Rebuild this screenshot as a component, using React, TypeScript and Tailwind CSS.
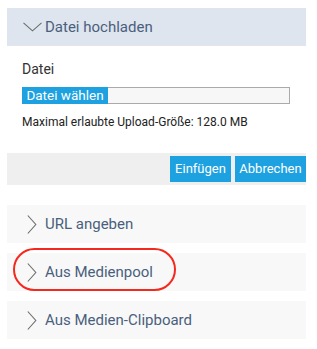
import React from 'react';

const ChevronDown = () => (
  <svg width="19" height="10" viewBox="0 0 19 10" fill="none" className="shrink-0">
    <path d="M0.5 0.8 L9.5 8.8 L18.5 0.8" stroke="#6b6b6b" strokeWidth="1.1" />
  </svg>
);

const ChevronRight = () => (
  <svg width="10" height="19" viewBox="0 0 10 19" fill="none" className="shrink-0">
    <path d="M0.8 0.5 L8.8 9.5 L0.8 18.5" stroke="#6b6b6b" strokeWidth="1.1" />
  </svg>
);

const CollapsedPanel = ({ title, marked }: { title: string; marked?: boolean }) => (
  <div className="relative h-[38px] bg-[#f8f8f8] flex items-center pl-[20px] gap-[8px]">
    <ChevronRight />
    <span className="text-[15px] text-[#4a5f7d]">{title}</span>
    {marked && (
      <div className="absolute left-[6px] top-[-5px] w-[163px] h-[43px] rounded-[22px] border-[2.5px] border-[#f5281e]" />
    )}
  </div>
);

export default function App() {
  return (
    <div className="w-[317px] h-[349px] bg-white pt-[8px] pl-[7px]" style={{ fontFamily: 'Roboto, "Liberation Sans", sans-serif' }}>
      <div className="w-[299px]">
        {/* Upload panel */}
        <div className="h-[38px] bg-[#dfe5ee] flex items-center pl-[16px] gap-[3px]">
          <ChevronDown />
          <span className="text-[15px] text-[#4a5f7d]">Datei hochladen</span>
        </div>

        <div className="pl-[15px] pt-[15px] pb-[24px]">
          <div className="text-[14px] text-[#333] leading-[17px]">Datei</div>
          <div className="flex mt-[9px] h-[17px]">
            <div className="w-[86px] bg-[#1ea1e0] text-white text-[13.5px] flex items-center justify-center leading-none pt-[1px]">
              Datei wählen
            </div>
            <div className="w-[182px] bg-[#f7f7f7] border border-l-0 border-[#aaaaaa]" />
          </div>
          <div className="mt-[11px] text-[12px] text-[#222] leading-[14px]">
            Maximal erlaubte Upload-Größe: 128.0 MB
          </div>
        </div>

        <div className="h-[32px] bg-[#efefef] flex items-center justify-end gap-[4px]">
          <button className="h-[26px] w-[61px] bg-[#1ea1e0] text-white text-[13px]">Einfügen</button>
          <button className="h-[26px] w-[71px] bg-[#1ea1e0] text-white text-[13px]">Abbrechen</button>
        </div>

        <div className="mt-[20px] flex flex-col gap-[10px]">
          <CollapsedPanel title="URL angeben" />
          <CollapsedPanel title="Aus Medienpool" marked />
          <CollapsedPanel title="Aus Medien-Clipboard" />
        </div>
      </div>
    </div>
  );
}
